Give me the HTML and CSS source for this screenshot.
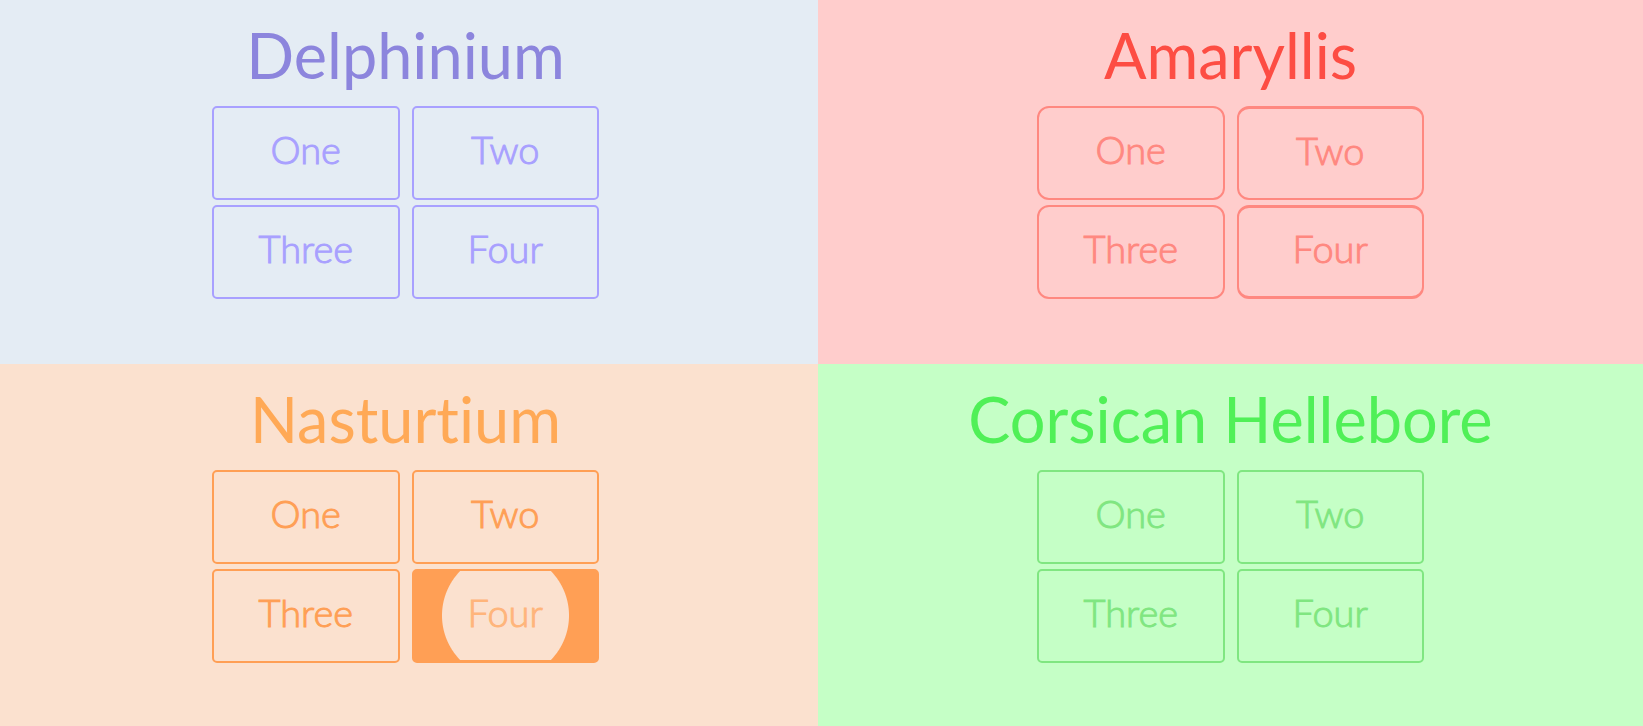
FILE: index.html
```html
<!DOCTYPE html>
<html lang="en">
<head>
<meta charset="utf-8">
<title>Flower buttons</title>
<link rel="stylesheet" href="styles.css">
</head>
<body>
<main class="garden">
  <section class="panel delphinium">
    <h1 class="title">Delphinium</h1>
    <div class="buttons">
      <button class="btn">One</button>
      <button class="btn">Two</button>
      <button class="btn">Three</button>
      <button class="btn">Four</button>
    </div>
  </section>
  <section class="panel amaryllis">
    <h1 class="title">Amaryllis</h1>
    <div class="buttons">
      <button class="btn">One</button>
      <button class="btn thick-top">Two</button>
      <button class="btn">Three</button>
      <button class="btn thick-top thick-bottom">Four</button>
    </div>
  </section>
  <section class="panel nasturtium">
    <h1 class="title">Nasturtium</h1>
    <div class="buttons">
      <button class="btn">One</button>
      <button class="btn">Two</button>
      <button class="btn">Three</button>
      <button class="btn closing thick-bottom">Four</button>
    </div>
  </section>
  <section class="panel hellebore">
    <h1 class="title">Corsican Hellebore</h1>
    <div class="buttons">
      <button class="btn">One</button>
      <button class="btn">Two</button>
      <button class="btn">Three</button>
      <button class="btn">Four</button>
    </div>
  </section>
</main>
</body>
</html>
```

FILE: styles.css
```css
* { box-sizing: border-box; }

body { margin: 0; }

.garden {
  display: grid;
  grid-template-columns: 818fr 825fr;
  grid-template-rows: 182fr 181fr;
  min-height: 100vh;
}

.panel {
  display: flex;
  flex-direction: column;
  align-items: center;
  gap: 8px;
  padding-top: 12px;
  background: var(--bg);
}

.delphinium { --bg: #e4ecf4; --title: #8c85dd; --line: #a8a0ff; --radius: 5px; padding-right: 7px; }
.amaryllis { --bg: #ffcdcc; --title: #fd4d43; --line: #ff8880; --radius: 12px; }
.nasturtium { --bg: #fbe1cf; --title: #ffa956; --line: #ff9f55; --radius: 5px; padding-right: 7px; }
.hellebore { --bg: #c5ffc6; --title: #50f057; --line: #80e681; --radius: 5px; }

.title {
  margin: 0;
  color: var(--title);
  font: 400 63px/86px Lato, "Open Sans", sans-serif;
  font-variant-ligatures: none;
}

.buttons {
  display: grid;
  grid-template-columns: 1fr 1fr;
  gap: 5px 12px;
  width: 387px;
  max-width: 100%;
}

.btn {
  height: 94px;
  padding: 0 0 8px;
  border: 2px solid var(--line);
  border-radius: var(--radius);
  background: transparent;
  color: var(--line);
  font: 300 38px/48px Lato, "Open Sans", sans-serif;
  -webkit-text-stroke: 1px var(--line);
  cursor: pointer;
}

.thick-top { border-top-width: 3px; }
.thick-bottom { border-bottom-width: 3px; }

.closing {
  background: radial-gradient(circle at center, var(--bg) 63px, var(--line) 64px) padding-box, var(--line);
  color: #ffb57b;
  -webkit-text-stroke-color: #ffb57b;
}
```
